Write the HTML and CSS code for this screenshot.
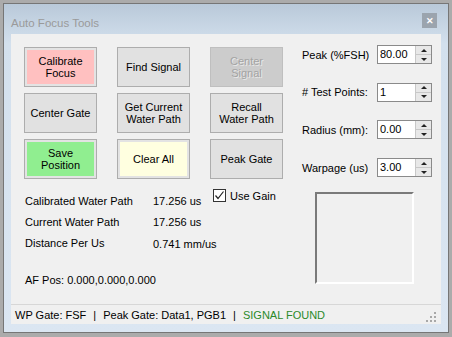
FILE: index.html
```html
<!DOCTYPE html>
<html>
<head>
    <title>Auto Focus Tools</title>
    <link rel="stylesheet" href="styles.css">
</head>
<body>
    <div class="window">
        <div class="titlebar">
            <span class="title">Auto Focus Tools</span>
            <span class="close">&#x2715;</span>
        </div>
        <div class="client">
            <div class="top">
                <div class="buttons">
                    <button class="btn pink">Calibrate<br>Focus</button>
                    <button class="btn">Find Signal</button>
                    <button class="btn disabled">Center<br>Signal</button>
                    <button class="btn">Center Gate</button>
                    <button class="btn">Get Current<br>Water Path</button>
                    <button class="btn">Recall<br>Water Path</button>
                    <button class="btn green">Save<br>Position</button>
                    <button class="btn yellow">Clear All</button>
                    <button class="btn">Peak Gate</button>
                </div>
                <div class="fields">
                    <div class="field">
                        <span class="label">Peak (%FSH)</span>
                        <div class="spin"><span class="val">80.00</span><span class="arrows"><span class="up"></span><span class="down"></span></span></div>
                    </div>
                    <div class="field">
                        <span class="label"># Test Points:</span>
                        <div class="spin"><span class="val">1</span><span class="arrows"><span class="up"></span><span class="down"></span></span></div>
                    </div>
                    <div class="field">
                        <span class="label">Radius (mm):</span>
                        <div class="spin"><span class="val">0.00</span><span class="arrows"><span class="up"></span><span class="down"></span></span></div>
                    </div>
                    <div class="field">
                        <span class="label">Warpage (us)</span>
                        <div class="spin"><span class="val">3.00</span><span class="arrows"><span class="up"></span><span class="down"></span></span></div>
                    </div>
                </div>
            </div>
            <div class="bottom">
                <div class="info">
                    <div class="rows">
                        <span>Calibrated Water Path</span><span>17.256 us</span>
                        <span>Current Water Path</span><span>17.256 us</span>
                        <span>Distance Per Us</span><span class="lower">0.741 mm/us</span>
                    </div>
                    <div class="afpos">AF Pos: 0.000,0.000,0.000</div>
                </div>
                <div class="check">
                    <span class="box">
                        <svg width="11" height="11" viewBox="0 0 11 11"><path d="M1.5 5.5 L4 8.5 L9.5 1.5" fill="none" stroke="#222" stroke-width="1.2"/></svg>
                    </span>
                    <span>Use Gain</span>
                </div>
                <div class="preview"></div>
            </div>
            <div class="status">
                <span>WP Gate: FSF</span>
                <span class="sep">|</span>
                <span>Peak Gate: Data1, PGB1</span>
                <span class="sep">|</span>
                <span class="found">SIGNAL FOUND</span>
                <svg class="grip" width="11" height="11" viewBox="0 0 11 11">
                    <rect x="8" y="0" width="2" height="2" fill="#a8a8a8"/>
                    <rect x="4" y="4" width="2" height="2" fill="#a8a8a8"/>
                    <rect x="8" y="4" width="2" height="2" fill="#a8a8a8"/>
                    <rect x="0" y="8" width="2" height="2" fill="#a8a8a8"/>
                    <rect x="4" y="8" width="2" height="2" fill="#a8a8a8"/>
                    <rect x="8" y="8" width="2" height="2" fill="#a8a8a8"/>
                </svg>
            </div>
        </div>
    </div>
</body>
</html>
```

FILE: styles.css
```css
body {
    margin: 0;
    background-color: #ababab;
    font-family: "Liberation Sans", Arial, sans-serif;
    font-size: 11px;
    color: #000;
}

.window {
    margin: 3px 0 0 3px;
    border: 1px solid #767676;
    background: linear-gradient(#b9c9d9, #d3e0ed 40px, #dbe6f2);
    padding: 0 7px 8px 7px;
    width: 430px;
    height: 320px;
}

.titlebar {
    height: 30px;
    display: flex;
    align-items: center;
    padding-top: 4px;
    box-sizing: border-box;
}

.title {
    font-size: 11.5px;
    color: #9a9a9a;
    margin-top: 3px;
    flex: 1;
}

.close {
    width: 15px;
    height: 15px;
    background-color: #9ba4ae;
    color: #fff;
    font-size: 9px;
    font-weight: bold;
    display: flex;
    align-items: center;
    justify-content: center;
    margin-right: 4px;
    margin-top: -1px;
}

.client {
    height: 290px;
    background-color: #f0f0f0;
    display: flex;
    flex-direction: column;
}

.top {
    display: flex;
    padding: 13px 0 0 13px;
}

.buttons {
    display: grid;
    grid-template-columns: repeat(3, 73px);
    grid-auto-rows: 40px;
    column-gap: 20px;
    row-gap: 6px;
}

.btn {
    font-family: inherit;
    font-size: 11px;
    line-height: 12px;
    color: #000;
    padding: 0;
    background-color: #e1e1e1;
    border: 1px solid #adadad;
}

.pink, .green, .yellow {
    box-shadow: inset 0 0 0 2px #e3e3e3;
}

.pink { background-color: #ffc0c0; }
.green { background-color: #90ee90; }
.yellow { background-color: #ffffe0; }

.disabled {
    background-color: #cccccc;
    border-color: #bfbfbf;
    color: #a3a3a3;
    text-shadow: 1px 1px 0 #e8e8e8;
}

.fields {
    margin-left: 19px;
    display: flex;
    flex-direction: column;
    gap: 18.7px;
    margin-top: -2px;
}

.field {
    display: flex;
    align-items: center;
    height: 19px;
}

.label {
    width: 75px;
}

.spin {
    width: 55px;
    height: 19px;
    box-sizing: border-box;
    border: 1px solid #8a8a8a;
    background-color: #fff;
    display: flex;
}

.val {
    flex: 1;
    padding-left: 2px;
    line-height: 17px;
}

.arrows {
    width: 15px;
    display: flex;
    flex-direction: column;
    border-left: 1px solid #c8c8c8;
    background-color: #f0f0f0;
}

.up, .down {
    flex: 1;
    display: flex;
    align-items: center;
    justify-content: center;
    background-color: #e8e8e8;
}

.up {
    border-bottom: 1px solid #c8c8c8;
}

.up::after {
    content: "";
    border-left: 3px solid transparent;
    border-right: 3px solid transparent;
    border-bottom: 3px solid #222;
}

.down::after {
    content: "";
    border-left: 3px solid transparent;
    border-right: 3px solid transparent;
    border-top: 3px solid #222;
}

.bottom {
    display: flex;
    align-items: flex-start;
    margin-top: 10px;
}

.info {
    margin-left: 14px;
    width: 188px;
    padding-top: 2px;
    white-space: nowrap;
}

.rows {
    display: grid;
    grid-template-columns: 128px 60px;
    line-height: 21px;
}

.lower {
    padding-top: 1px;
}

.afpos {
    margin-top: 15px;
    line-height: 21px;
}

.check {
    width: 102px;
    display: flex;
    align-items: center;
    gap: 4px;
    height: 13px;
}

.box {
    width: 13px;
    height: 13px;
    box-sizing: border-box;
    border: 1px solid #333;
    background-color: #fff;
    display: flex;
    align-items: center;
    justify-content: center;
}

.preview {
    margin-top: 3px;
    width: 99px;
    height: 92px;
    box-sizing: border-box;
    border-top: 2px solid #7a7a7a;
    border-left: 2px solid #7a7a7a;
    border-bottom: 2px solid #fff;
    border-right: 2px solid #fff;
}

.status {
    margin-top: auto;
    height: 20px;
    box-sizing: border-box;
    border-top: 1px solid #d7d7d7;
    display: flex;
    align-items: center;
    padding: 1px 4px 0 4px;
    font-size: 11px;
}

.sep {
    margin: 0 7px;
}

.found {
    color: #2a8a2a;
}

.grip {
    margin-left: auto;
    margin-top: 5px;
}
```
